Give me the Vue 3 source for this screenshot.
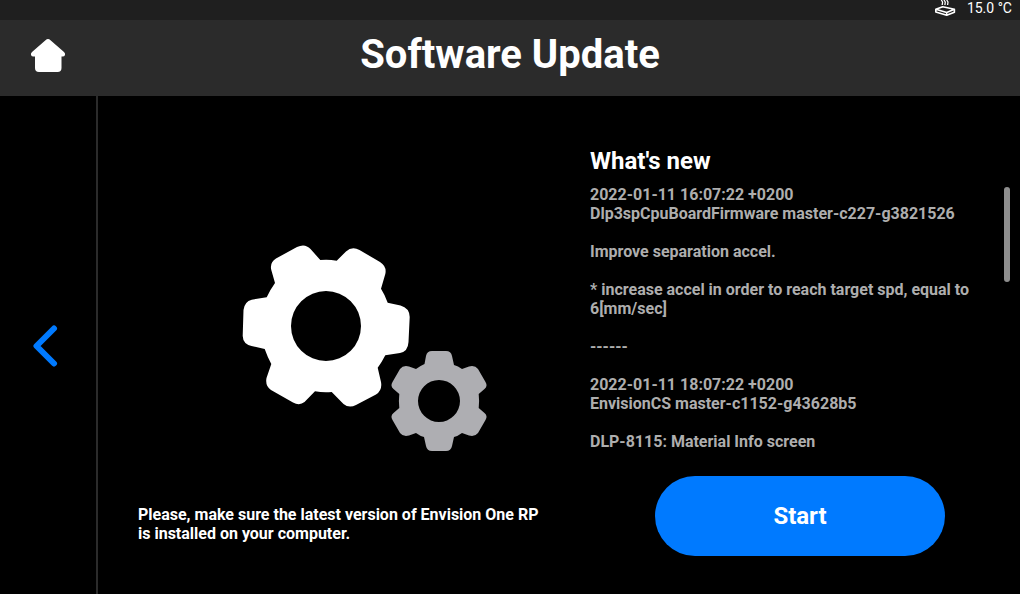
<script setup>
import { ref } from 'vue'

const temperature = ref('15.0 °C')
const notes = [
  '2022-01-11 16:07:22 +0200\nDlp3spCpuBoardFirmware master-c227-g3821526',
  'Improve separation accel.',
  '* increase accel in order to reach target spd, equal to 6[mm/sec]',
  '------',
  '2022-01-11 18:07:22 +0200\nEnvisionCS master-c1152-g43628b5',
  'DLP-8115: Material Info screen',
]
</script>

<template>
  <div class="screen">
    <div class="status">
      <svg class="resin" viewBox="0 0 22 18" aria-hidden="true">
        <path d="M1.800 9.300 8.700 6.700 20.400 9.300 12.700 12.400ZM1.800 9.300V12L12.700 15.200 20.400 12.200V9.300M12.700 12.400V15" />
        <path class="heat" d="M7.300 0 8.600 2 8.200 5M10 0 11.300 2 10.900 5M12.700 0 14 2 13.600 5" />
      </svg>
      <span>{{ temperature }}</span>
    </div>
    <header class="header">
      <button class="home" type="button" aria-label="Home">
        <svg viewBox="0 0 36 36" aria-hidden="true">
          <path d="M15.500 2.200Q18 0 20.500 2.200L34 14Q35.500 15.500 35 17Q34.500 18.500 32.500 18.500H31.500V30Q31.500 34 27.500 34H9Q5 34 5 30V18.500H3.500Q1.500 18.500 1 17Q.5 15.500 2 14Z" />
        </svg>
      </button>
      <h1>Software Update</h1>
    </header>
    <div class="body">
      <nav class="side">
        <button class="back" type="button" aria-label="Back">
          <svg viewBox="0 0 26 44" aria-hidden="true"><path d="M22 4.500 4.500 22 22 39.500" /></svg>
        </button>
      </nav>
      <section class="info">
        <svg class="gears" viewBox="0 0 246 208" aria-hidden="true">
          <path
            class="big"
            fill-rule="evenodd"
            d="M33 39 29.300 26Q27.500 18.500 34 14.500L55 3Q63 -1 68.500 5L78.300 16Q86 15 94.700 16.700L104 7.500Q110 2 117.500 6L138 18Q145 22.500 143.300 30L139 44.700Q143 51 145.700 58.700L158.500 61.500Q167.500 64 167.700 73L166.500 98Q166 107.500 158 109L143.300 111.300Q140 118 135.700 123.700L139 138Q140.500 146 134 150.500L114 161Q107 164.500 101.500 160L89.700 148Q81 148.700 73 147.300L62.500 158Q57.500 162 51 158.500L29 146Q23 142 24.500 134L29.300 120Q25.500 113 22.700 105L9.500 102Q1 100 .7 92L1.500 66Q2.500 57.500 9.700 55.700L24.700 53.300Q28 46 33 39ZM84 47A35 35 0 1 0 84 117A35 35 0 1 0 84 47Z"
          />
          <path
            class="small"
            fill-rule="evenodd"
            d="M182.500 120 184 112Q185 107 190 107H204Q209 107 210 112L212 121Q216 122 220 125L227 122.500Q233 121 236 125L243.500 138Q246 142 242.500 145L236.700 150Q237.500 157 236.700 164L242.500 169Q246 172 243.500 176L236 189Q233 193 227 191.500L220 189Q216 192 212 193L210 202Q209 207 204 207H190Q185 207 184 202L182 193Q178 192 174 189L167 191.500Q161 193 158 189L150.500 176Q148 172 151.500 169L157.300 164Q156.500 157 157.300 150L151.500 145Q148 142 150.500 138L158 125Q161 121 167 122.500L174 125Q178 122 182.500 120ZM197 136A21 21 0 1 0 197 178A21 21 0 1 0 197 136Z"
          />
        </svg>
        <p class="hint">Please, make sure the latest version of Envision One RP is installed on your computer.</p>
      </section>
      <section class="news">
        <h2>What's new</h2>
        <div class="log">
          <div class="entries">
            <p v-for="(note, i) in notes" :key="i">{{ note }}</p>
          </div>
          <div class="track"><div class="thumb"></div></div>
        </div>
        <button class="start" type="button">Start</button>
      </section>
    </div>
  </div>
</template>

<style>
body {
  margin: 0;
  background: #000;
}
</style>

<style scoped>
.screen {
  display: flex;
  flex-direction: column;
  min-height: 100vh;
  background: #000;
  color: #fff;
  font-family: Roboto, "Liberation Sans", sans-serif;
  font-weight: 700;
}
button {
  padding: 0;
  border: 0;
  background: none;
  color: inherit;
  font: inherit;
  cursor: pointer;
}
svg {
  display: block;
}
.status {
  display: flex;
  justify-content: flex-end;
  align-items: flex-start;
  gap: 11px;
  height: 20px;
  padding-right: 8px;
  background: #1f1f1f;
  font-size: 14px;
  font-weight: 400;
  line-height: 16px;
}
.resin {
  width: 22px;
  height: 18px;
  fill: none;
  stroke: #fff;
  stroke-width: 1.6;
  stroke-linejoin: round;
}
.heat {
  stroke-width: 1.3;
}
.header {
  display: grid;
  grid-template-columns: 96px 1fr 96px;
  align-items: center;
  box-sizing: border-box;
  height: 76px;
  padding-bottom: 4px;
  background: #2b2b2b;
}
.home {
  justify-self: center;
}
.home svg {
  width: 36px;
  height: 36px;
  fill: #fff;
}
h1 {
  margin: 0;
  padding-bottom: 2px;
  font-size: 40px;
  line-height: 48px;
  text-align: center;
}
.body {
  flex: 1;
  display: grid;
  grid-template-columns: 98px 1fr 1fr;
}
.side {
  display: flex;
  align-items: center;
  justify-content: center;
  padding: 2px 6px 0 0;
  border-right: 2px solid #2b2b2b;
}
.back svg {
  width: 26px;
  height: 44px;
  fill: none;
  stroke: #007aff;
  stroke-width: 6;
  stroke-linecap: round;
  stroke-linejoin: round;
}
.info {
  padding: 148px 16px 0 40px;
}
.gears {
  width: 246px;
  height: 208px;
  margin-left: 104px;
}
.big {
  fill: #fff;
}
.small {
  fill: #aeaeb2;
}
.hint {
  margin: 53px 0 0;
  font-size: 16px;
  line-height: 19px;
}
.news {
  display: flex;
  flex-direction: column;
  padding: 50px 10px 38px 31px;
}
h2 {
  margin: 0;
  font-size: 24px;
  line-height: 30px;
}
.log {
  display: flex;
  flex: 1;
  justify-content: space-between;
  margin-top: 9px;
}
.entries {
  flex: 1;
  color: #aeaeae;
  font-size: 16px;
  line-height: 19px;
}
.entries p {
  margin: 0 0 19px;
  white-space: pre-line;
}
.track {
  width: 6px;
  margin-left: 24px;
  padding-top: 2px;
}
.thumb {
  height: 95px;
  border-radius: 3px;
  background: #8e8e8e;
}
.start {
  align-self: center;
  width: 290px;
  height: 80px;
  border-radius: 40px;
  background: #007aff;
  font-size: 24px;
}
</style>
